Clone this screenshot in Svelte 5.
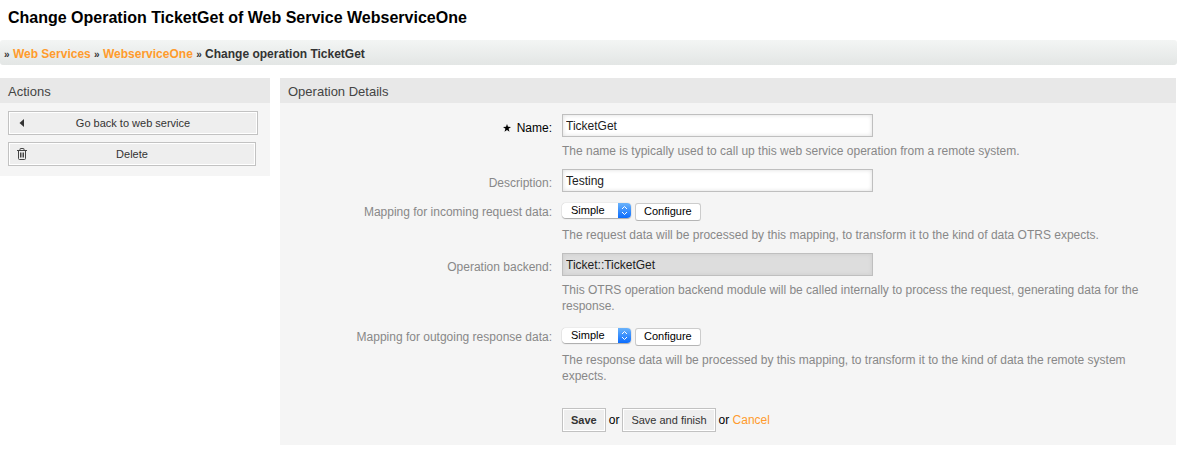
<script>
  let name = $state('TicketGet');
  let description = $state('Testing');
  let incoming = $state('Simple');
  let outgoing = $state('Simple');
</script>

{#snippet mapping(id, value, set)}
  <div class="mapping">
    <span class="select">
      <select {id} {value} onchange={(e) => set(e.currentTarget.value)}>
        <option>Simple</option>
        <option>XSLT</option>
      </select>
      <svg viewBox="0 0 13 15" aria-hidden="true">
        <path d="M4 6 6.5 3.5 9 6M4 9 6.5 11.5 9 9" />
      </svg>
    </span>
    <button type="button" class="configure">Configure</button>
  </div>
{/snippet}

<div class="page">
  <h1>Change Operation TicketGet of Web Service WebserviceOne</h1>

  <nav>
    <i>»</i> <a href="#services">Web Services</a> <i>»</i> <a href="#service">WebserviceOne</a> <i>»</i> Change operation TicketGet
  </nav>

  <div class="columns">
    <aside>
      <h2>Actions</h2>
      <div class="actions">
        <button type="button" class="btn back">
          <svg viewBox="0 0 14 14" aria-hidden="true"><path d="M9 3v8L4.500 7z" fill="#333" /></svg>
          <span>Go back to web service</span>
        </button>
        <button type="button" class="btn delete">
          <svg viewBox="0 0 14 14" aria-hidden="true">
            <path
              d="M2 3.5h10M5 3.5V2q0-.5.5-.5h3q.5 0 .5.5v1.500M3.500 3.500v8q0 1 1 1h5q1 0 1-1v-8M5.500 5.500v5M7 5.500v5M8.500 5.500v5"
              fill="none"
              stroke="#444"
            />
          </svg>
          <span>Delete</span>
        </button>
      </div>
    </aside>

    <main>
      <h2>Operation Details</h2>
      <form onsubmit={(e) => e.preventDefault()}>
        <label for="name" class="required">
          <svg viewBox="0 0 8 8" aria-hidden="true">
            <path d="M4 0 5 2.800 8 2.900 5.600 4.700 6.500 7.800 4 6 1.500 7.800 2.400 4.700 0 2.900 3 2.800z" />
          </svg>
          Name:
        </label>
        <div class="field">
          <input id="name" type="text" bind:value={name} />
          <p>The name is typically used to call up this web service operation from a remote system.</p>
        </div>

        <label for="description">Description:</label>
        <div class="field">
          <input id="description" type="text" bind:value={description} />
        </div>

        <label for="incoming" class="compact">Mapping for incoming request data:</label>
        <div class="field">
          {@render mapping('incoming', incoming, (v) => (incoming = v))}
          <p>The request data will be processed by this mapping, to transform it to the kind of data OTRS expects.</p>
        </div>

        <label for="backend">Operation backend:</label>
        <div class="field backend">
          <input id="backend" type="text" value="Ticket::TicketGet" readonly />
          <p>This OTRS operation backend module will be called internally to process the request, generating data for the response.</p>
        </div>

        <label for="outgoing" class="compact">Mapping for outgoing response data:</label>
        <div class="field">
          {@render mapping('outgoing', outgoing, (v) => (outgoing = v))}
          <p>The response data will be processed by this mapping, to transform it to the kind of data the remote system expects.</p>
        </div>

        <div class="submit">
          <button type="submit" class="btn"><strong>Save</strong></button>
          <span>or</span>
          <button type="submit" class="btn">Save and finish</button>
          <span>or <a href="#cancel">Cancel</a></span>
        </div>
      </form>
    </main>
  </div>
</div>

<style>
  :global(body) {
    background: #fff;
  }
  .page {
    padding: 8px 16px 10px 0;
    font: 12px/16px 'Liberation Sans', Arial, sans-serif;
    color: #000;
  }
  h1 {
    margin: 0 0 12px;
    padding-left: 8px;
    font-size: 16px;
    line-height: 20px;
  }
  a {
    color: #ff9b2d;
    text-decoration: none;
  }
  nav {
    margin-bottom: 13px;
    margin-right: -1px;
    padding: 3px 4px 0;
    border-radius: 3px;
    background: linear-gradient(#f3f5f4, #e3e6e5);
    color: #333;
    font-weight: bold;
    line-height: 22px;
  }
  nav i {
    font-size: 10px;
    font-style: normal;
    line-height: 12px;
  }
  .columns {
    display: flex;
    align-items: flex-start;
    gap: 10px;
  }
  aside,
  main {
    background: #f5f5f5;
  }
  aside {
    flex: 0 0 270px;
  }
  main {
    flex: 1;
    min-width: 0;
  }
  h2 {
    margin: 0;
    padding: 2px 8px 0;
    background: #e8e8e8;
    color: #444;
    font-size: 13px;
    font-weight: normal;
    line-height: 23px;
  }
  .actions {
    display: flex;
    flex-direction: column;
    gap: 7px;
    padding: 8px 14px 10px 8px;
  }
  .btn {
    height: 24px;
    padding: 0 8px;
    border: 1px solid #c2c2c2;
    background: #eee;
    box-shadow: inset 1px 1px #fff, inset -1px -1px #fff;
    color: #333;
    font: 11px/14px 'Liberation Sans', Arial, sans-serif;
  }
  .actions .btn {
    display: grid;
    grid-template-columns: 14px 1fr;
    align-items: center;
    padding: 0 20px 0 6px;
  }
  .actions .back {
    margin-right: -2px;
  }
  .actions svg {
    width: 14px;
    height: 14px;
  }
  form {
    display: grid;
    grid-template-columns: 272px minmax(0, 586px);
    gap: 10px;
    padding: 11px 16px 13px 0;
  }
  label {
    padding-top: 6px;
    color: #888;
    text-align: right;
  }
  label.compact {
    padding-top: 2px;
  }
  label.required {
    color: #000;
  }
  .required svg {
    width: 8px;
    height: 8px;
    margin-right: 2px;
  }
  .field {
    min-width: 0;
  }
  .backend {
    padding-bottom: 3px;
  }
  input {
    display: block;
    box-sizing: border-box;
    width: 100%;
    max-width: 311px;
    height: 23px;
    padding: 0 3px;
    border: 1px solid #bfbfbf;
    border-radius: 0;
    background: #fff;
    box-shadow: inset 0 0 4px #ddd;
    color: #222;
    font: inherit;
  }
  input:read-only {
    background: #ddd;
    box-shadow: inset 0 0 4px #ccc;
  }
  p {
    margin: 6px 0 0;
    color: #888;
  }
  .mapping {
    display: flex;
    align-items: flex-start;
    gap: 4px;
    padding-top: 1px;
  }
  .select {
    display: grid;
    grid-template-columns: 56px 13px;
    border-radius: 4px;
    overflow: hidden;
    box-shadow: 0 1px 1px #aaa, 0 0 1px #999;
  }
  select {
    grid-area: 1 / 1 / 2 / 3;
    height: 15px;
    padding: 0 18px 0 9px;
    border: 0;
    appearance: none;
    background: #fff;
    color: #000;
    font: 11px/15px 'Liberation Sans', Arial, sans-serif;
  }
  .select svg {
    grid-area: 1 / 2;
    width: 13px;
    height: 15px;
    background: linear-gradient(#6bb3fa, #0a6cfe);
    fill: none;
    stroke: #fff;
    pointer-events: none;
  }
  .configure {
    height: 18px;
    padding: 0 8px 2px;
    border: 1px solid #ccc;
    border-bottom-color: #b5b5b5;
    border-radius: 3px;
    background: #fff;
    color: #000;
    font: 11px/14px 'Liberation Sans', Arial, sans-serif;
  }
  .submit {
    grid-column: 2;
    display: flex;
    align-items: center;
    gap: 3px;
    padding-top: 14px;
  }
</style>
